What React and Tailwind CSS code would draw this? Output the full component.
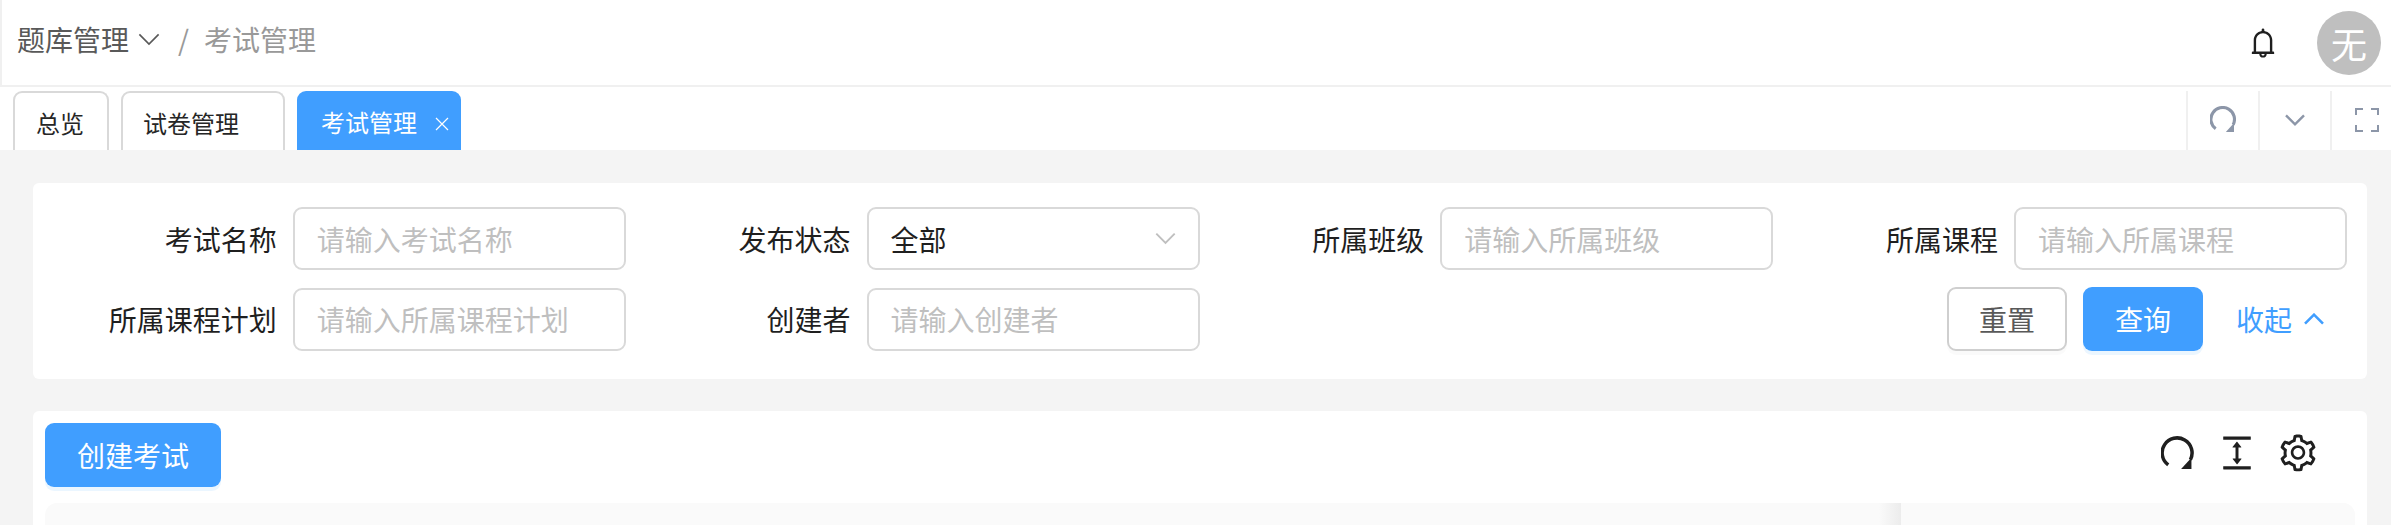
import React from 'react';
import { AiOutlineBell, AiOutlineColumnHeight, AiOutlineSetting } from 'react-icons/ai';

const font = { fontFamily: '"Noto Sans CJK SC", "Noto Sans", sans-serif' };

const RefreshIcon = ({ className, width = 3.4 }) => (
  <svg viewBox="0 0 32 32" fill="none" className={className}>
    <path d="M7 28 A14.5 14.5 0 1 1 28.5 23" stroke="currentColor" strokeWidth={width} />
    <path d="M19.5 32 L29.5 32 L29.5 21 Z" fill="currentColor" />
  </svg>
);

const Chevron = ({ className, up, width = 2.4 }) => (
  <svg viewBox="0 0 24 14" fill="none" className={className}>
    <path d={up ? 'M1.5 12.5 L12 2 L22.5 12.5' : 'M1.5 1.5 L12 12 L22.5 1.5'} stroke="currentColor" strokeWidth={width} />
  </svg>
);

const FullscreenIcon = ({ className }) => (
  <svg viewBox="0 0 24 24" fill="none" className={className}>
    <path d="M1 7 V1 H8 M16 1 H23 V7 M23 17 V23 H16 M8 23 H1 V17" stroke="currentColor" strokeWidth="2" />
  </svg>
);

const Field = ({ label, placeholder }) => (
  <div className="flex items-center justify-end gap-[16px]">
    <label className="text-[28px] text-[#1f1f1f]">{label}</label>
    <input
      placeholder={placeholder}
      className="w-[333px] h-[63px] rounded-[9px] border-2 border-[#d9d9d9] px-[22px] text-[28px] bg-white outline-none placeholder:text-[#bfbfbf]"
      style={font}
    />
  </div>
);

const App = () => {
  return (
    <div className="h-[525px] overflow-hidden bg-[#f4f4f4] flex flex-col" style={font}>
      <div className="h-[87px] shrink-0 bg-white border-l-2 border-b-2 border-[#f0f0f0] flex items-center pl-[15px] pr-[10px]">
        <div className="flex items-center pb-[8px]">
          <span className="text-[28px] text-[#595959]">题库管理</span>
          <Chevron width={1.8} className="w-[22px] h-[13px] ml-[9px] mt-[2px] text-[#595959]" />
          <span className="text-[28px] text-[#999999] ml-[18px]">/</span>
          <span className="text-[28px] text-[#999999] ml-[15px]">考试管理</span>
        </div>
        <div className="flex-1" />
        <AiOutlineBell className="text-[34px] text-[#1f1f1f] mr-[37px]" />
        <div className="w-[64px] h-[64px] rounded-full bg-[#bfbfbf] text-white text-[36px] flex items-center justify-center">无</div>
      </div>

      <div className="h-[63px] shrink-0 bg-white flex items-end pl-[13px]">
        <div className="h-[59px] w-[96px] rounded-t-[9px] border-2 border-b-0 border-[#d9d9d9] flex items-center pl-[21px] text-[24px] text-[#262626] pt-[2px]">总览</div>
        <div className="h-[59px] w-[164px] ml-[12px] rounded-t-[9px] border-2 border-b-0 border-[#d9d9d9] flex items-center pl-[20px] text-[24px] text-[#262626] pt-[2px]">试卷管理</div>
        <div className="h-[59px] w-[164px] ml-[12px] rounded-t-[9px] bg-[#409eff] text-white flex items-center pl-[24px] text-[24px] pt-[2px]">
          考试管理
          <svg viewBox="0 0 14 14" className="w-[14px] h-[14px] ml-[18px] mt-[4px]" fill="none">
            <path d="M1 1 L13 13 M13 1 L1 13" stroke="currentColor" strokeWidth="1.2" />
          </svg>
        </div>
        <div className="flex-1" />
        <div className="h-[59px] w-[72px] border-l-2 border-[#f0f0f0] flex items-center justify-center">
          <RefreshIcon width={3.8} className="w-[26px] h-[26px] text-[#8c96a8] mb-[4px]" />
        </div>
        <div className="h-[59px] w-[72px] border-l-2 border-[#f0f0f0] flex items-center justify-center">
          <Chevron width={2.8} className="w-[22px] h-[12px] text-[#8c96a8] mb-[1px]" />
        </div>
        <div className="h-[59px] w-[61px] border-l-2 border-[#f0f0f0] flex items-center pl-[23px]">
          <FullscreenIcon className="w-[24px] h-[24px] text-[#8c96a8] mb-[1px]" />
        </div>
      </div>

      <div className="flex-1 pl-[33px] pr-[24px] pt-[33px] min-h-0">
        <div className="h-[196px] bg-white rounded-[6px] pt-[24px] pl-[19px] pr-[20px]">
          <div className="grid grid-cols-4 gap-y-[17px]">
            <Field label="考试名称" placeholder="请输入考试名称" />
            <div className="flex items-center justify-end gap-[16px]">
              <label className="text-[28px] text-[#1f1f1f]">发布状态</label>
              <div className="w-[333px] h-[63px] rounded-[9px] border-2 border-[#d9d9d9] pl-[22px] pr-[22px] flex items-center justify-between text-[28px] text-[#1f1f1f]">
                全部
                <Chevron width={2.2} className="w-[21px] h-[13px] text-[#bfbfbf]" />
              </div>
            </div>
            <Field label="所属班级" placeholder="请输入所属班级" />
            <Field label="所属课程" placeholder="请输入所属课程" />
            <Field label="所属课程计划" placeholder="请输入所属课程计划" />
            <Field label="创建者" placeholder="请输入创建者" />
            <div className="col-span-2 flex items-center justify-end">
              <button className="w-[120px] h-[64px] rounded-[9px] border-2 border-[#cfcfcf] text-[28px] text-[#595959] bg-white shadow-[0_4px_0_rgba(0,0,0,0.02)]">重置</button>
              <button className="w-[120px] h-[64px] ml-[16px] rounded-[9px] bg-[#409eff] text-[28px] text-white shadow-[0_4px_0_rgba(5,145,255,0.08)]">查询</button>
              <span className="ml-[33px] text-[28px] text-[#409eff]">收起</span>
              <Chevron up width={3} className="w-[22px] h-[12px] ml-[11px] mr-[22px] text-[#409eff]" />
            </div>
          </div>
        </div>

        <div className="mt-[32px] bg-white rounded-t-[6px] px-[12px] pt-[12px] h-[200px]">
          <div className="flex items-center h-[64px]">
            <button className="w-[176px] h-[64px] rounded-[9px] bg-[#409eff] text-[28px] text-white shadow-[0_4px_0_rgba(5,145,255,0.08)]">创建考试</button>
            <div className="flex-1" />
            <div className="flex items-center pb-[5px] mr-[36px]">
              <RefreshIcon className="w-[33px] h-[33px] text-[#1f1f1f]" />
              <AiOutlineColumnHeight className="text-[42px] text-[#1f1f1f] ml-[22px]" />
              <AiOutlineSetting className="text-[42px] text-[#1f1f1f] ml-[19px]" />
            </div>
          </div>
          <div className="mt-[16px] h-[60px] bg-[#fafafa] rounded-t-[12px] flex justify-end">
            <div className="w-[22px] h-full bg-gradient-to-r from-[#fafafa] to-[#ececec]" />
            <div className="w-[454px] h-full bg-[#fafafa] rounded-tr-[12px]" />
          </div>
        </div>
      </div>
    </div>
  );
};

export default App;
